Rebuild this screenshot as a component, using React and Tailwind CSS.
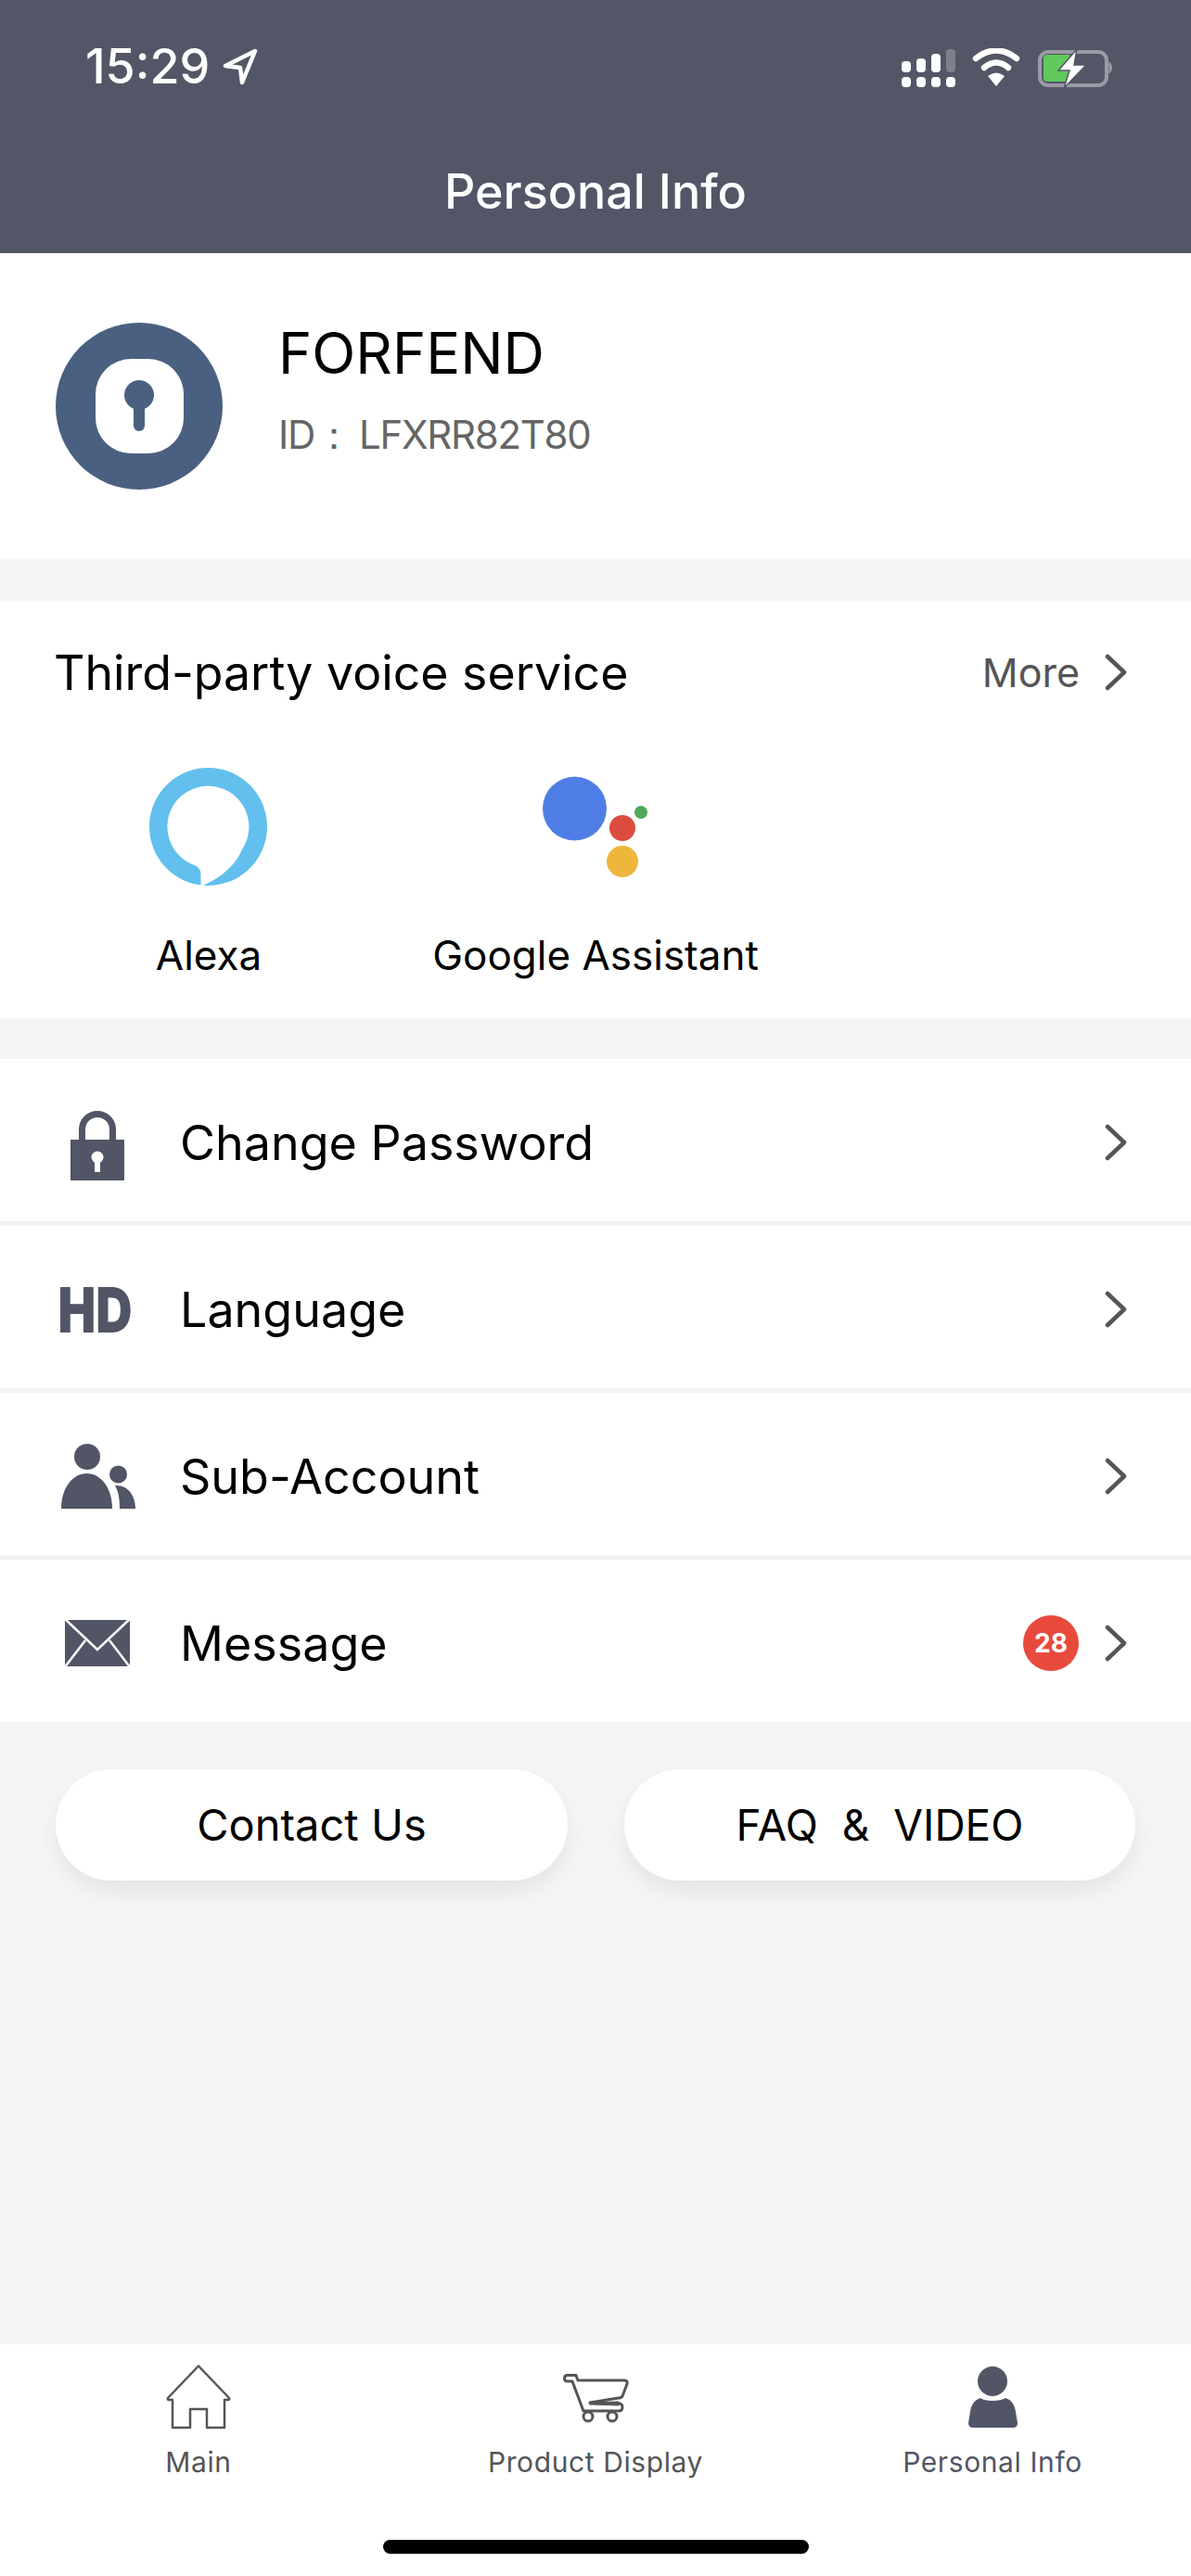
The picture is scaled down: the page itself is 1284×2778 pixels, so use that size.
const bodyFont = "font-['Inter','Liberation_Sans',sans-serif]";

const Chevron = () => (
    <svg viewBox="0 0 26 40" className="w-[26px] h-[40px] shrink-0" fill="none" stroke="#555555" strokeWidth="4.5" strokeLinecap="round" strokeLinejoin="round">
        <path d="M4 3 L22 20 L4 37" />
    </svg>
);

const StatusBar = () => (
    <div className="flex items-start justify-between h-[177px] pt-[46px] pl-[92px] pr-[82px]">
        <div className="flex items-center gap-[13px] h-[52px]">
            <span className="text-[52px] leading-[52px] font-medium text-white">15:29</span>
            <svg viewBox="0 0 40 40" className="w-[40px] h-[40px]" fill="none" stroke="white" strokeWidth="4.5" strokeLinejoin="round">
                <path d="M36 3 L4 19 L20 21 L22 37 Z" />
            </svg>
        </div>
        <svg viewBox="0 0 232 44" className="w-[232px] h-[44px] mt-[6px]">
            {/* signal bars */}
            <rect x="2" y="14" width="10" height="12" rx="4" fill="white" />
            <rect x="18" y="11" width="10" height="15" rx="4" fill="white" />
            <rect x="34" y="6" width="10" height="20" rx="4" fill="white" />
            <rect x="50" y="1" width="10" height="25" rx="4" fill="#7d7f8d" />
            {[2, 18, 34, 50].map((x) => (
                <rect key={x} x={x} y="31" width="10" height="11" rx="4" fill="white" />
            ))}
            {/* wifi */}
            <path d="M82 11 Q104 -6 126 11" fill="none" stroke="white" strokeWidth="6.5" strokeLinecap="round" />
            <path d="M91 21 Q104 10 117 21" fill="none" stroke="white" strokeWidth="6.5" strokeLinecap="round" />
            <path d="M95 30 Q104 23 113 30 L104 41 Z" fill="white" />
            {/* battery */}
            <rect x="151" y="4" width="72" height="36" rx="9" fill="none" stroke="#9a9ba7" strokeWidth="4" />
            <path d="M226 15 Q231 21 226 27 Z" fill="#9a9ba7" stroke="#9a9ba7" strokeWidth="1" />
            <path d="M159 7 H183 V36 H159 Q155 36 155 32 V11 Q155 7 159 7 Z" fill="#5fc95c" />
            <path d="M191 1 L171 24 H183 L177 43 L201 18 H188 Z" fill="white" stroke="#535666" strokeWidth="1.5" />
        </svg>
    </div>
);

const MenuIcons = {
    lock: (
        <svg viewBox="0 0 90 90" className="w-[90px] h-[90px]">
            <path d="M28.5 44V31a16.5 16.5 0 0 1 33 0v13" fill="none" stroke="#525566" strokeWidth="7" />
            <rect x="16" y="42" width="58" height="44" fill="#525566" />
            <circle cx="45" cy="61" r="6.5" fill="white" />
            <path d="M42 62h6v15h-6z" fill="white" />
        </svg>
    ),
    hd: (
        <span className="block w-[90px] text-[68px] leading-[90px] font-black text-[#525566] scale-x-[0.8] origin-left pl-[3px] whitespace-nowrap">HD</span>
    ),
    users: (
        <svg viewBox="0 0 90 90" className="w-[90px] h-[90px]" fill="#525566">
            <circle cx="34" cy="24" r="14" />
            <path d="M6 80 C6 58 18 42 33.5 42 C49 42 61 58 61 80 Z" />
            <circle cx="67.5" cy="43" r="9.5" />
            <path d="M64 55 C78 54 86 66 86 80 H69 C69 70 68 62 64 55 Z" />
        </svg>
    ),
    mail: (
        <svg viewBox="0 0 90 90" className="w-[90px] h-[90px]">
            <rect x="10" y="20" width="70" height="50" fill="#525566" />
            <path d="M9 18 L45 52 L81 18 M9 72 L32 42 M81 72 L58 42" fill="none" stroke="white" strokeWidth="2.5" />
        </svg>
    )
};

const rows = [
    { label: 'Change Password', icon: 'lock' },
    { label: 'Language', icon: 'hd' },
    { label: 'Sub-Account', icon: 'users' },
    { label: 'Message', icon: 'mail', badge: 28 }
];

const Tab = ({ label, color, children }) => (
    <div className="w-[428px] flex flex-col items-center">
        <div className="h-[90px] flex items-center justify-center">{children}</div>
        <span className={`text-[30px] leading-[36px] mt-[7px] tracking-[0.6px] ${color} whitespace-nowrap`}>{label}</span>
    </div>
);

const App = () => {
    return (
        <div className={`w-[1284px] h-[2778px] flex flex-col bg-[#f5f5f5] ${bodyFont} text-black overflow-hidden`}>
            <header className="h-[273px] shrink-0 bg-[#535666]">
                <StatusBar />
                <h1 className="text-center text-[52px] leading-[60px] font-medium text-white">Personal Info</h1>
            </header>

            <section className="h-[330px] shrink-0 bg-white flex items-start pt-[75px] pl-[60px]">
                <div className="w-[180px] h-[180px] rounded-full bg-[#4a6081] flex items-center justify-center">
                    <div className="relative w-[95px] h-[102px] rounded-[38px] bg-white">
                        <div className="absolute left-[31px] top-[23px] w-[32px] h-[32px] rounded-full bg-[#4a6081]" />
                        <div className="absolute left-[41px] top-[45px] w-[12px] h-[33px] rounded-full bg-[#4a6081]" />
                    </div>
                </div>
                <div className="pl-[60px]">
                    <div className="text-[61.5px] leading-[70px] -mt-[2px]">FORFEND</div>
                    <div className="flex text-[42px] leading-[52px] mt-[27px] text-[#666666] tracking-[-1.3px]">
                        <span className="w-[87px]">ID：</span>
                        <span>LFXRR82T80</span>
                    </div>
                </div>
            </section>

            <section className="mt-[45px] h-[450px] shrink-0 bg-white">
                <div className="flex items-center justify-between pl-[58px] pr-[68px] pt-[46px]">
                    <span className="text-[51.8px] leading-[62px]">Third-party voice service</span>
                    <div className="flex items-center gap-[26px] text-[43px] leading-[62px] text-[#555555]">
                        <span>More</span>
                        <Chevron />
                    </div>
                </div>
                <div className="flex pt-[72px]">
                    <div className="w-[450px] flex flex-col items-center">
                        <svg viewBox="0 0 128 128" className="w-[128px] h-[128px]">
                            <path
                                fill="#62bfee"
                                d="M55.5 126.5 A63.5 63.5 0 0 1 63.5 0 A63.5 63.5 0 0 1 127 63.5 A63.5 63.5 0 0 1 58 126.76 C78 118 93 105 100 88 A44 44 0 1 0 46 104 C52 106 55.5 109 55.5 115 Z"
                            />
                        </svg>
                        <span className="text-[44px] leading-[52px] mt-[48px]">Alexa</span>
                    </div>
                    <div className="w-[384px] flex flex-col items-center">
                        <svg viewBox="0 0 114 128" className="w-[114px] h-[128px]">
                            <circle cx="34.5" cy="44" r="34.5" fill="#4f7fe6" />
                            <circle cx="86" cy="65" r="14" fill="#db4c3f" />
                            <circle cx="86" cy="101" r="17" fill="#edb73c" />
                            <circle cx="106" cy="48" r="7" fill="#51a85b" />
                        </svg>
                        <span className="text-[44px] leading-[52px] mt-[48px] whitespace-nowrap">Google Assistant</span>
                    </div>
                </div>
            </section>

            <section className="mt-[44px] shrink-0 flex flex-col gap-[5px] bg-[#f2f2f2] border-b border-[#f2f2f2]">
                {rows.map((row) => (
                    <div key={row.label} className="h-[175px] bg-white flex items-center pl-[60px] pr-[68px] pt-[5px]">
                        <div className="w-[134px] shrink-0">{MenuIcons[row.icon]}</div>
                        <span className="text-[52px] leading-[62px] flex-1 pt-[2px]">{row.label}</span>
                        {row.badge && (
                            <span className="w-[60px] h-[60px] rounded-full bg-[#e84a3c] text-white text-[28px] font-bold flex items-center justify-center mr-[27px]">
                                {row.badge}
                            </span>
                        )}
                        <Chevron />
                    </div>
                ))}
            </section>

            <div className="flex gap-[61px] pl-[60px] pt-[50px] flex-1">
                <button className="w-[552px] h-[120px] rounded-full bg-white text-[47px] shadow-[0_12px_24px_rgba(0,0,0,0.07)]">Contact Us</button>
                <button className="w-[551px] h-[120px] rounded-full bg-white text-[46px] whitespace-pre shadow-[0_12px_24px_rgba(0,0,0,0.07)]">FAQ  &  VIDEO</button>
            </div>

            <nav className="h-[250px] shrink-0 bg-white flex flex-col">
                <div className="flex pt-[12px]">
                    <Tab label="Main" color="text-[#555555]">
                        <svg viewBox="0 0 70 70" className="w-[70px] h-[70px]" fill="none" stroke="#555555" strokeWidth="2.5" strokeLinejoin="round">
                            <path d="M35 1.5 L68 36 Q69 38 66 38 H63 V68 H44 V48 H26 V68 H7 V38 H4 Q1 38 2 36 Z" />
                        </svg>
                    </Tab>
                    <Tab label="Product Display" color="text-[#555555]">
                        <svg viewBox="14 16 76 58" className="w-[76px] h-[58px] ml-[2px]" fill="none" stroke="#555555" strokeWidth="3" strokeLinecap="round" strokeLinejoin="round">
                            <path d="M32 27 L30 21.5 H21 Q17.5 21.5 17.5 25 Q17.5 28 21 28 H26 L38 60 H76 Q80 60 80 56 Q80 52 76 52" />
                            <path d="M34 27 H82 Q86 27 85 31 L80 44 Q79 46 76 46 L45 51 L76 52" />
                            <path d="M45 51 L76 50 V54 L45 53 Z" fill="#555555" strokeWidth="1" />
                            <circle cx="43" cy="66" r="5" />
                            <circle cx="69" cy="66" r="5" />
                        </svg>
                    </Tab>
                    <Tab label="Personal Info" color="text-[#525566]">
                        <svg viewBox="18 10 60 68" className="w-[60px] h-[68px]" fill="#525566">
                            <circle cx="48" cy="27" r="16" />
                            <path d="M35 45 C39 49 57 49 62 45 C68 47 72 52 73 60 L75 72 Q75 77 70 77 H27 Q22 77 22 72 L24 60 C25 52 29 47 35 45 Z" />
                        </svg>
                    </Tab>
                </div>
                <div className="mt-auto mb-[24px] mx-auto w-[459px] h-[15px] rounded-full bg-black" />
            </nav>
        </div>
    );
};

export default App;
